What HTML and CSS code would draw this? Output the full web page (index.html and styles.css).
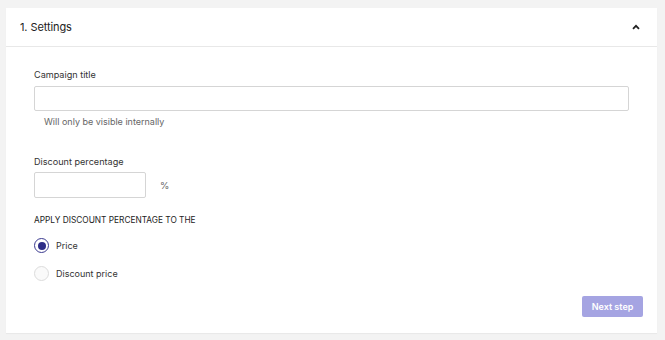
FILE: index.html
```html
<!DOCTYPE html>
<html>
<head>
<meta charset="utf-8">
<link rel="stylesheet" href="styles.css">
</head>
<body>
<div class="card">
  <div class="card-header">
    <span class="card-title">1. Settings</span>
    <svg class="chevron" width="8" height="6" viewBox="0 0 8 6"><path d="M1 4.8 L4 1.8 L7 4.8" fill="none" stroke="#222" stroke-width="1.8"/></svg>
  </div>
  <div class="card-body">
    <div class="field">
      <label class="label">Campaign title</label>
      <input class="input input-wide" type="text">
      <div class="help">Will only be visible internally</div>
    </div>
    <div class="field field-pct">
      <label class="label label-tight">Discount percentage</label>
      <div class="pct-row">
        <input class="input input-small" type="text">
        <span class="pct">%</span>
      </div>
    </div>
    <div class="section-label">APPLY DISCOUNT PERCENTAGE TO THE</div>
    <div class="radios">
      <div class="radio-row"><span class="radio checked"></span><span class="radio-text">Price</span></div>
      <div class="radio-row"><span class="radio"></span><span class="radio-text">Discount price</span></div>
    </div>
    <div class="actions"><button class="btn">Next step</button></div>
  </div>
</div>
</body>
</html>
```
FILE: styles.css
```css
html, body { margin: 0; padding: 0; }
body {
  background: #f3f3f3;
  font-family: Inter, "Noto Sans", sans-serif;
  color: #222;
  width: 665px;
  height: 340px;
  overflow: hidden;
}
.card {
  margin: 8px 8px 0 6px;
  width: 651px;
  height: 325px;
  background: #fff;
  box-sizing: border-box;
  box-shadow: 0 1px 1px rgba(0,0,0,0.04);
}
.card-header {
  height: 38px;
  border-bottom: 1px solid #e8e8e8;
  display: flex;
  align-items: center;
  justify-content: space-between;
  padding: 0 17px 0 14px;
}
.card-title { font-size: 11px; color: #222; letter-spacing: -0.1px; }
.chevron { display: block; }
.card-body { padding: 22px 28px 0 28px; }
.field { display: flex; flex-direction: column; }
.label { font-size: 9.1px; color: #333; line-height: 12px; margin-bottom: 5px; }
.label-tight { margin-bottom: 4px; }
.input {
  box-sizing: border-box;
  border: 1px solid #d5d5d5;
  border-radius: 2px;
  height: 25px;
  background: #fff;
  margin: 0;
  outline: none;
}
.input-wide { width: 595px; }
.help { font-size: 9px; color: #666; margin: 5px 0 0 10px; line-height: 11px; }
.field-pct { margin-top: 29px; }
.pct-row { display: flex; align-items: center; }
.input-small { width: 112px; height: 26px; }
.pct { font-size: 9.5px; color: #666; margin-left: 14px; }
.section-label { font-size: 8.3px; color: #222; margin-top: 16px; line-height: 12px; }
.radios { margin-top: 12px; display: flex; flex-direction: column; gap: 13px; }
.radio-row { display: flex; align-items: center; }
.radio {
  box-sizing: border-box;
  width: 15px; height: 15px;
  border-radius: 50%;
  border: 1px solid #dcdcdc;
  background: #fafafa;
  position: relative;
}
.radio.checked { border: 1.3px solid #3b3a8f; background: #fff; }
.radio.checked::after {
  content: "";
  position: absolute;
  left: 50%; top: 50%;
  width: 8px; height: 8px;
  margin: -4px 0 0 -4px;
  border-radius: 50%;
  background: #2e2d88;
}
.radio-text { font-size: 9px; color: #333; margin-left: 7px; }
.actions { display: flex; justify-content: flex-end; margin-top: 15px; margin-right: -14px; }
.btn {
  width: 61px; height: 21px;
  background: #a5a4e2;
  color: #fff;
  border: none;
  border-radius: 2px;
  font-family: Inter, sans-serif;
  font-weight: 600;
  font-size: 9px;
  padding: 0;
}
```
